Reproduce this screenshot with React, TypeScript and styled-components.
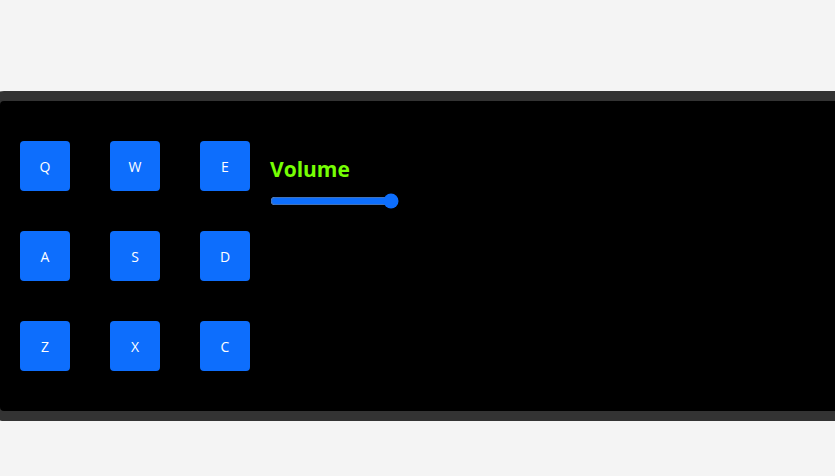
import React from "react";
import styled, { createGlobalStyle } from "styled-components";

const Global = createGlobalStyle`
  html, body { margin: 0; padding: 0; background: #f4f4f4; overflow: hidden; }
  body { font-family: "Open Sans", "Noto Sans", sans-serif; }
`;

const Page = styled.div`
  width: 835px;
  height: 476px;
  padding-top: 91px;
  box-sizing: border-box;
  overflow: hidden;
`;

const Machine = styled.div`
  margin-left: -10px;
  width: 870px;
  height: 330px;
  box-sizing: border-box;
  border: 10px solid #333333;
  border-radius: 14px;
  background: #000;
  padding: 40px 20px;
  display: flex;
  gap: 20px;
`;

const Pads = styled.div`
  display: grid;
  grid-template-columns: repeat(3, 50px);
  grid-auto-rows: 50px;
  gap: 40px;
`;

const Pad = styled.button`
  width: 50px;
  height: 50px;
  border: none;
  border-radius: 4px;
  background: #0d6efd;
  color: #fff;
  font-family: "Open Sans", "Noto Sans", sans-serif;
  font-size: 14px;
  padding: 0;
  display: flex;
  align-items: center;
  justify-content: center;
`;

const Controls = styled.div`
  display: flex;
  flex-direction: column;
  padding-top: 14px;
`;

const Label = styled.div`
  color: #76ff03;
  font-family: "Open Sans", "Noto Sans", sans-serif;
  font-weight: 700;
  font-size: 21px;
  line-height: 28px;
  margin: 0 0 8px 0;
`;

const Range = styled.input`
  accent-color: #0d6efd;
  margin: 2px 0;
`;

const keys = ["Q", "W", "E", "A", "S", "D", "Z", "X", "C"];

export default function App() {
  return (
    <>
      <Global />
      <Page>
        <Machine>
          <Pads>
            {keys.map((k) => (
              <Pad key={k}>{k}</Pad>
            ))}
          </Pads>
          <Controls>
            <Label>Volume</Label>
            <Range type="range" min={0} max={1} step={0.01} defaultValue={1} />
          </Controls>
        </Machine>
      </Page>
    </>
  );
}
